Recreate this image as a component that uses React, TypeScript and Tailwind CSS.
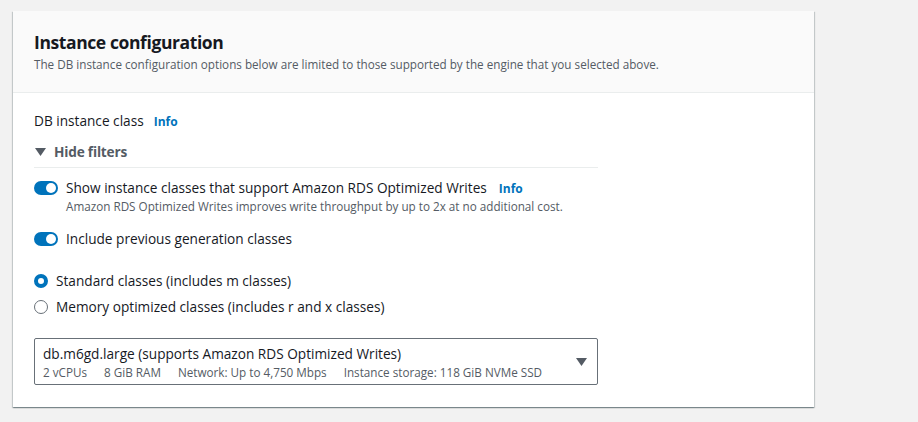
import { ReactNode } from "react";

const font = { fontFamily: '"Open Sans", "Liberation Sans", sans-serif' };

function Toggle() {
  return (
    <span className="relative inline-block h-[14px] w-[24px] shrink-0 rounded-full bg-[#0073bb]">
      <span className="absolute right-[2px] top-[2px] h-[10px] w-[10px] rounded-full bg-white" />
    </span>
  );
}

function Radio({ checked }: { checked?: boolean }) {
  return checked ? (
    <span className="inline-block h-[14px] w-[14px] shrink-0 rounded-full border-[4px] border-[#0073bb] bg-white" />
  ) : (
    <span className="inline-block h-[14px] w-[14px] shrink-0 rounded-full border border-[#687078] bg-white" />
  );
}

function Info() {
  return <span className="text-[12px] font-bold text-[#0073bb]">Info</span>;
}

function ToggleRow({ children }: { children: ReactNode }) {
  return (
    <div className="flex items-center gap-[8px]">
      <Toggle />
      <span className="text-[13.65px] text-[#16191f]">{children}</span>
    </div>
  );
}

export default function App() {
  return (
    <div className="min-h-[422px] w-[918px] bg-[#f2f2f2] pl-[13px] pt-[11px]" style={font}>
      <div className="w-[801px] bg-white shadow-[0_1px_1px_0_rgba(0,28,36,0.3),1px_1px_1px_0_rgba(0,28,36,0.15),-1px_1px_1px_0_rgba(0,28,36,0.15)]">
        <div className="border-b border-[#eaeded] bg-[#fafafa] px-[21px] pb-[20px] pt-[19px]">
          <h2 className="text-[17.5px] font-bold leading-[24px] tracking-[-0.4px] text-[#16191f]">Instance configuration</h2>
          <p className="mt-[2px] text-[11.7px] leading-[16px] text-[#545b64]">
            The DB instance configuration options below are limited to those supported by the engine that you selected above.
          </p>
        </div>

        <div className="px-[21px] pb-[22px] pt-[18px]">
          <div className="flex items-baseline gap-[10px] leading-[20px]">
            <span className="text-[13.65px] text-[#16191f]">DB instance class</span>
            <Info />
          </div>

          <div className="mt-[10px] w-[564px] border-b border-[#eaeded] pb-[5px]">
            <div className="flex items-center gap-[8px] leading-[20px]">
              <svg width="11" height="8" viewBox="0 0 11 8" className="ml-[1px]">
                <path d="M0 0h11L5.5 8z" fill="#545b64" />
              </svg>
              <span className="text-[13.65px] font-bold tracking-[-0.2px] text-[#545b64]">Hide filters</span>
            </div>
          </div>

          <div className="mt-[9px] leading-[20px]">
            <div className="flex items-center gap-[8px]">
              <Toggle />
              <span className="text-[13.65px] text-[#16191f]">Show instance classes that support Amazon RDS Optimized Writes</span>
              <span className="ml-[4px]">
                <Info />
              </span>
            </div>
            <div className="ml-[32px] text-[11.7px] leading-[14px] text-[#545b64]">
              Amazon RDS Optimized Writes improves write throughput by up to 2x at no additional cost.
            </div>
          </div>

          <div className="mt-[16px] leading-[20px]">
            <ToggleRow>Include previous generation classes</ToggleRow>
          </div>

          <div className="mt-[22px] flex flex-col gap-[6px] leading-[20px]">
            <div className="flex items-center gap-[8px]">
              <Radio checked />
              <span className="text-[13.65px] text-[#16191f]">Standard classes (includes m classes)</span>
            </div>
            <div className="flex items-center gap-[8px]">
              <Radio />
              <span className="text-[13.65px] text-[#16191f]">Memory optimized classes (includes r and x classes)</span>
            </div>
          </div>

          <div className="mt-[21px] flex w-[564px] items-center justify-between rounded-[2px] border border-[#687078] pb-[4px] pl-[8px] pr-[10px] pt-[5px]">
            <div>
              <div className="text-[13.65px] leading-[20px] text-[#16191f]">db.m6gd.large (supports Amazon RDS Optimized Writes)</div>
              <div className="flex gap-[17px] text-[11.7px] leading-[16px] text-[#545b64]">
                <span>2 vCPUs</span>
                <span>8 GiB RAM</span>
                <span>Network: Up to 4,750 Mbps</span>
                <span>Instance storage: 118 GiB NVMe SSD</span>
              </div>
            </div>
            <svg width="11" height="8" viewBox="0 0 11 8">
              <path d="M0 0h11L5.5 8z" fill="#545b64" />
            </svg>
          </div>
        </div>
      </div>
    </div>
  );
}
